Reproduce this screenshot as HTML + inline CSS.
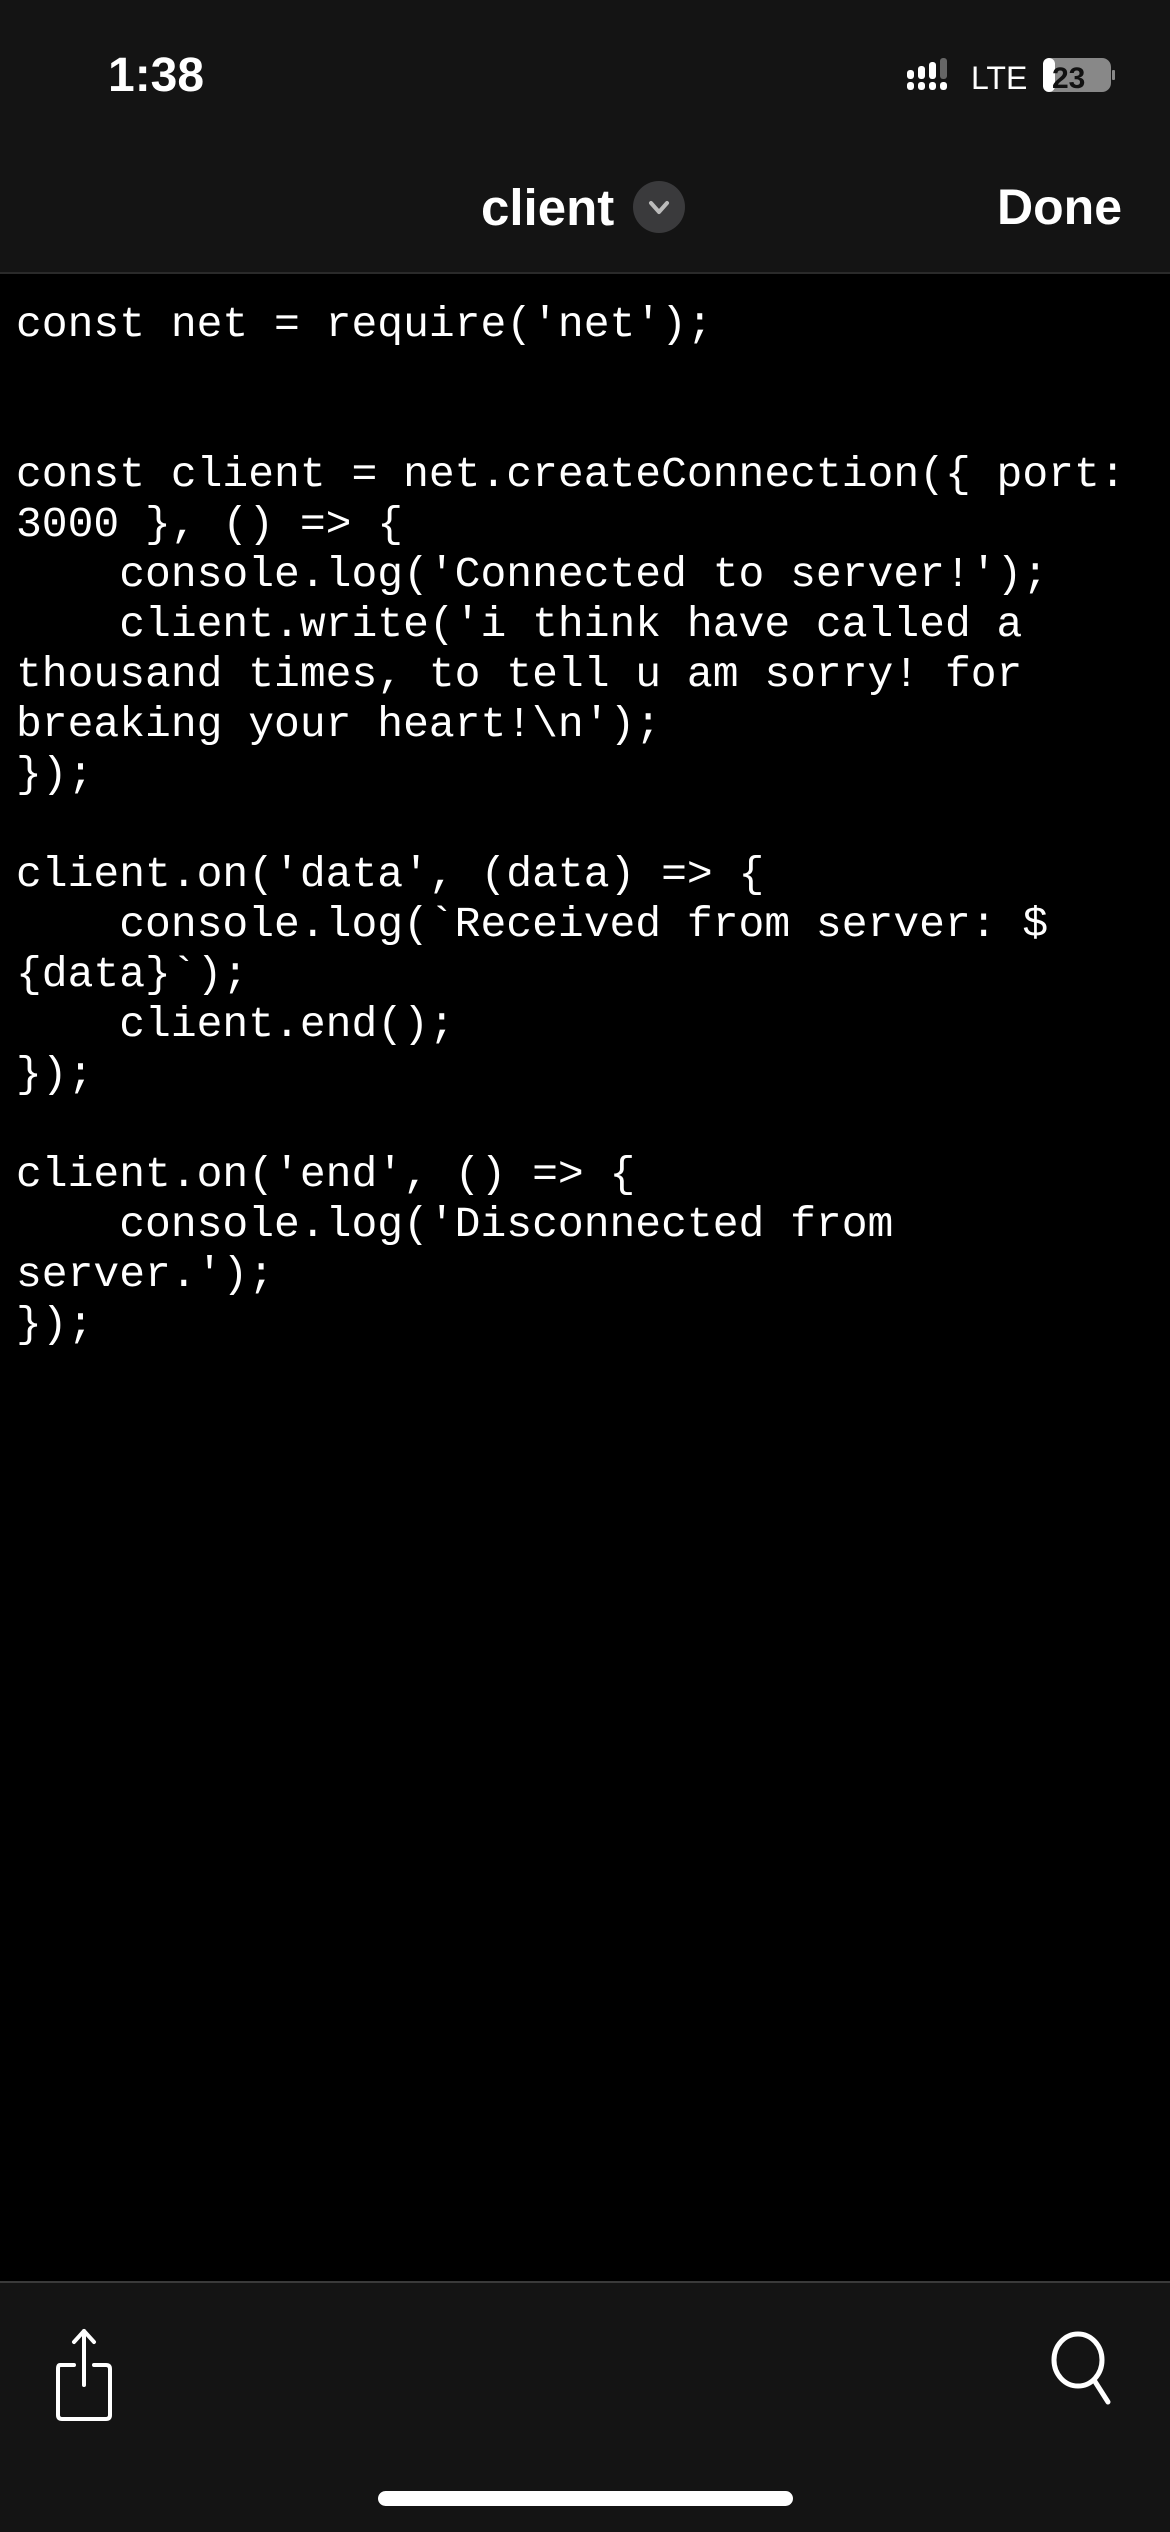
<!DOCTYPE html>
<html><head><meta charset="utf-8"><style>
*{margin:0;padding:0;box-sizing:border-box}
body{width:1170px;height:2532px;background:#000;position:relative;overflow:hidden;font-family:"Liberation Sans",sans-serif;color:#fff}
.top{position:absolute;left:0;top:0;width:1170px;height:274px;background:#141414;border-bottom:2px solid #2a2a2a}
.time{position:absolute;left:108px;top:48px;font-size:48px;font-weight:bold}
.title{position:absolute;left:481px;top:178px;font-size:51px;font-weight:bold}
.chev{position:absolute;left:633px;top:181px;width:52px;height:52px;border-radius:50%;background:#3a3a3c}
.done{position:absolute;right:48px;top:178px;font-size:50px;font-weight:bold}
pre{position:absolute;left:16px;top:300px;font-family:"Liberation Mono",monospace;font-size:43px;line-height:50px;color:#fff;letter-spacing:0}
.bot{position:absolute;left:0;top:2281px;width:1170px;height:251px;background:#141414;border-top:2px solid #3a3a3a}
.home{position:absolute;left:378px;top:2491px;width:415px;height:15px;border-radius:8px;background:#fff}
</style></head><body>
<div class="top">
<div class="time">1:38</div>
<svg style="position:absolute;left:905px;top:56px" width="210" height="40">
<g fill="#fff"><rect x="2" y="14" width="7" height="9" rx="3"/><rect x="2" y="26" width="7" height="8" rx="3"/><rect x="13" y="10" width="7" height="13" rx="3"/><rect x="13" y="26" width="7" height="8" rx="3"/><rect x="24" y="6" width="7" height="17" rx="3"/><rect x="24" y="26" width="7" height="8" rx="3"/><rect x="35" y="26" width="7" height="8" rx="3"/></g><rect x="35" y="2" width="7" height="21" rx="3" fill="#666"/>
<text x="66" y="33" font-family="Liberation Sans" font-size="32" fill="#fff">LTE</text>
<rect x="138" y="2" width="68" height="34" rx="9" fill="#888"/><rect x="138" y="2" width="12" height="34" rx="6" fill="#fff"/>
<text x="147" y="32" font-family="Liberation Sans" font-size="30" font-weight="bold" fill="#111">23</text>
<rect x="207" y="14" width="3" height="10" rx="1" fill="#888"/></svg>
<div class="title">client</div>
<div class="chev"><svg width="52" height="52"><path d="M18 22 L26 31 L34 22" stroke="#bbb" stroke-width="4" fill="none" stroke-linecap="round" stroke-linejoin="round"/></svg></div>
<div class="done">Done</div>
</div>
<pre>const net = require('net');


const client = net.createConnection({ port:
3000 }, () =&gt; {
    console.log('Connected to server!');
    client.write('i think have called a
thousand times, to tell u am sorry! for
breaking your heart!\n');
});

client.on('data', (data) =&gt; {
    console.log(`Received from server: $
{data}`);
    client.end();
});

client.on('end', () =&gt; {
    console.log('Disconnected from
server.');
});</pre>
<div class="bot">
<svg style="position:absolute;left:50px;top:40px" width="70" height="100"><g stroke="#fff" stroke-width="4" fill="none" stroke-linecap="round" stroke-linejoin="round"><path d="M34 8 V62"/><path d="M24 19 L34 8 L44 19"/><path d="M24 42 H10 Q8 42 8 46 V92 Q8 96 12 96 H56 Q60 96 60 92 V46 Q60 42 56 42 H44"/></g></svg>
<svg style="position:absolute;left:1048px;top:47px" width="80" height="100"><g stroke="#fff" stroke-width="5" fill="none" stroke-linecap="round"><ellipse cx="30" cy="30" rx="24" ry="26"/><path d="M46 50 L60 72"/></g></svg>
</div>
<div class="home"></div>
</body></html>
